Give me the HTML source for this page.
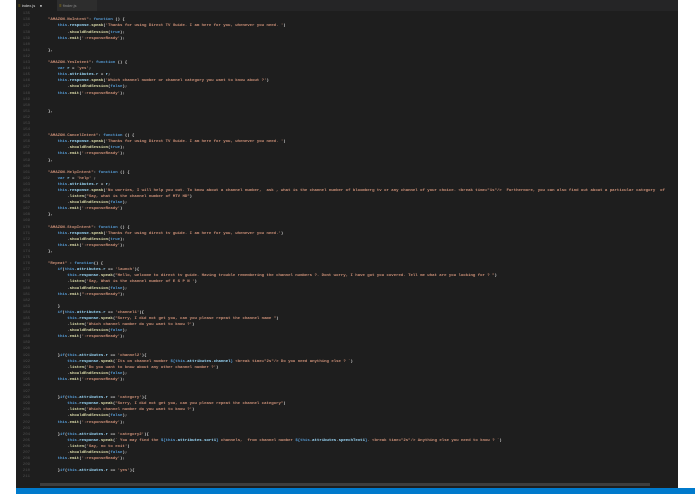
<!DOCTYPE html>
<html><head><meta charset="utf-8"><style>
html,body{margin:0;padding:0;background:#fff;width:695px;height:494px;overflow:hidden}
#ed{position:absolute;left:16px;top:0;width:662px;height:494px;background:#1e1e1e;overflow:hidden}
#tabs{position:absolute;left:0;top:0;width:662px;height:11px;background:#252526}
.tab{position:absolute;top:0;height:11px;font:4px "Liberation Sans",sans-serif;line-height:11px;color:#8a8a8a}
#gut,#code{position:absolute;top:11.3px;font-family:"Liberation Mono",monospace;font-size:4px;line-height:6.1px;white-space:pre;margin:0}
#gut{left:0;width:14px;text-align:right;color:#4e4e4e}
#code{left:22.4px;color:#d4d4d4;font-weight:bold}
.s{color:#ce9178}.k{color:#569cd6}.p{color:#9cdcfe}.f{color:#dcdcaa}
#sb{position:absolute;left:0;top:488px;width:679px;height:6px;background:#007acc}
#hs{position:absolute;left:24px;top:483px;width:610px;height:3px;background:#3e3e3e}
</style></head><body>
<div id="ed">
<div id="tabs">
<div class="tab" style="left:0;width:41px;background:#1e1e1e;color:#ddd">&nbsp;&nbsp;<span style="color:#c5a000">≡</span> index.js&nbsp;&nbsp;&nbsp;&nbsp;●</div>
<div class="tab" style="left:41px;width:40px;background:#2d2d2d">&nbsp;&nbsp;<span style="color:#c5a000">≡</span> finder.js</div>
</div>
<pre id="gut">135
136
137
138
139
140
141
142
143
144
145
146
147
148
149
150
151
152
153
154
155
156
157
158
159
160
161
162
163
164
165
166
167
168
169
170
171
172
173
174
175
176
177
178
179
180
181
182
183
184
185
186
187
188
189
190
191
192
193
194
195
196
197
198
199
200
201
202
203
204
205
206
207
208
209
210
211</pre>
<pre id="code">

    <span class="s">"AMAZON.NoIntent"</span>: <span class="k">function</span> () {
        <span class="k">this</span>.<span class="p">response</span>.<span class="f">speak</span>(<span class="s">'Thanks for using Direct TV Guide. I am here for you, whenever you need. '</span>)
            .<span class="f">shouldEndSession</span>(<span class="k">true</span>);
        <span class="k">this</span>.<span class="f">emit</span>(<span class="s">':responseReady'</span>);

    },

    <span class="s">"AMAZON.YesIntent"</span>: <span class="k">function</span> () {
        <span class="k">var</span> <span class="p">r</span> = <span class="s">'yes'</span>;
        <span class="k">this</span>.<span class="p">attributes</span>.<span class="p">r</span> = <span class="p">r</span>;
        <span class="k">this</span>.<span class="p">response</span>.<span class="f">speak</span>(<span class="s">'Which channel number or channel category you want to know about ?'</span>)
            .<span class="f">shouldEndSession</span>(<span class="k">false</span>);
        <span class="k">this</span>.<span class="f">emit</span>(<span class="s">':responseReady'</span>);


    },



    <span class="s">"AMAZON.CancelIntent"</span>: <span class="k">function</span> () {
        <span class="k">this</span>.<span class="p">response</span>.<span class="f">speak</span>(<span class="s">'Thanks for using Direct TV Guide. I am here for you, whenever you need. '</span>)
            .<span class="f">shouldEndSession</span>(<span class="k">true</span>);
        <span class="k">this</span>.<span class="f">emit</span>(<span class="s">':responseReady'</span>);
    },

    <span class="s">"AMAZON.HelpIntent"</span>: <span class="k">function</span> () {
        <span class="k">var</span> <span class="p">r</span> = <span class="s">'help'</span> ;
        <span class="k">this</span>.<span class="p">attributes</span>.<span class="p">r</span> = <span class="p">r</span>;
        <span class="k">this</span>.<span class="p">response</span>.<span class="f">speak</span>(<span class="s">'No worries, I will help you out. To know about a channel number,  ask , what is the channel number of bloomberg tv or any channel of your choice. &lt;break time="1s"/&gt;  Furthermore, you can also find out about a particular category  of</span>
            .<span class="f">listen</span>(<span class="s">"Say, what is the channel number of MTV HD"</span>)
            .<span class="f">shouldEndSession</span>(<span class="k">false</span>);
        <span class="k">this</span>.<span class="f">emit</span>(<span class="s">':responseReady'</span>)
    },

    <span class="s">"AMAZON.StopIntent"</span>: <span class="k">function</span> () {
        <span class="k">this</span>.<span class="p">response</span>.<span class="f">speak</span>(<span class="s">'Thanks for using direct tv guide. I am here for you, whenever you need.'</span>)
            .<span class="f">shouldEndSession</span>(<span class="k">true</span>);
        <span class="k">this</span>.<span class="f">emit</span>(<span class="s">':responseReady'</span>);
    },

    <span class="s">"Repeat"</span> : <span class="k">function</span>() {
        <span class="k">if</span>(<span class="k">this</span>.<span class="p">attributes</span>.<span class="p">r</span> == <span class="s">'launch'</span>){
            <span class="k">this</span>.<span class="p">response</span>.<span class="f">speak</span>(<span class="s">"Hello, welcome to direct tv guide. Having trouble remembering the channel numbers ?. Dont worry, I have got you covered. Tell me what are you looking for ? "</span>)
            .<span class="f">listen</span>(<span class="s">'Say, What is the channel number of E S P N '</span>)
            .<span class="f">shouldEndSession</span>(<span class="k">false</span>);
        <span class="k">this</span>.<span class="f">emit</span>(<span class="s">":responseReady"</span>);

        }
        <span class="k">if</span>(<span class="k">this</span>.<span class="p">attributes</span>.<span class="p">r</span> == <span class="s">'channel1'</span>){
            <span class="k">this</span>.<span class="p">response</span>.<span class="f">speak</span>(<span class="s">"Sorry, I did not get you, can you please repeat the channel name "</span>)
            .<span class="f">listen</span>(<span class="s">'Which channel number do you want to know ?'</span>)
            .<span class="f">shouldEndSession</span>(<span class="k">false</span>);
        <span class="k">this</span>.<span class="f">emit</span>(<span class="s">':responseReady'</span>);


        }<span class="k">if</span>(<span class="k">this</span>.<span class="p">attributes</span>.<span class="p">r</span> == <span class="s">'channel2'</span>){
            <span class="k">this</span>.<span class="p">response</span>.<span class="f">speak</span>(<span class="s">`Its on channel number </span><span class="k">${this</span>.<span class="p">attributes</span>.<span class="p">channel</span><span class="k">}</span><span class="s"> &lt;break time="2s"/&gt; Do you need anything else ? `</span>)
            .<span class="f">listen</span>(<span class="s">'Do you want to know about any other channel number ?'</span>)
            .<span class="f">shouldEndSession</span>(<span class="k">false</span>);
        <span class="k">this</span>.<span class="f">emit</span>(<span class="s">':responseReady'</span>);


        }<span class="k">if</span>(<span class="k">this</span>.<span class="p">attributes</span>.<span class="p">r</span> == <span class="s">'category'</span>){
            <span class="k">this</span>.<span class="p">response</span>.<span class="f">speak</span>(<span class="s">"Sorry, I did not get you, can you please repeat the channel category"</span>)
            .<span class="f">listen</span>(<span class="s">'Which channel number do you want to know ?'</span>)
            .<span class="f">shouldEndSession</span>(<span class="k">false</span>);
        <span class="k">this</span>.<span class="f">emit</span>(<span class="s">':responseReady'</span>);

        }<span class="k">if</span>(<span class="k">this</span>.<span class="p">attributes</span>.<span class="p">r</span> == <span class="s">'category2'</span>){
            <span class="k">this</span>.<span class="p">response</span>.<span class="f">speak</span>(<span class="s">` You may find the </span><span class="k">${this</span>.<span class="p">attributes</span>.<span class="p">sort1</span><span class="k">}</span><span class="s"> channels,  from channel number </span><span class="k">${this</span>.<span class="p">attributes</span>.<span class="p">speechText1</span><span class="k">}</span><span class="s">. &lt;break time="2s"/&gt; Anything else you need to know ? `</span>)
            .<span class="f">listen</span>(<span class="s">'Say, no to exit'</span>)
            .<span class="f">shouldEndSession</span>(<span class="k">false</span>);
        <span class="k">this</span>.<span class="f">emit</span>(<span class="s">':responseReady'</span>);

        }<span class="k">if</span>(<span class="k">this</span>.<span class="p">attributes</span>.<span class="p">r</span> == <span class="s">'yes'</span>){</pre>
<div id="hs"></div>
</div>
<div id="sb" style="left:16px"></div>
</body></html>
